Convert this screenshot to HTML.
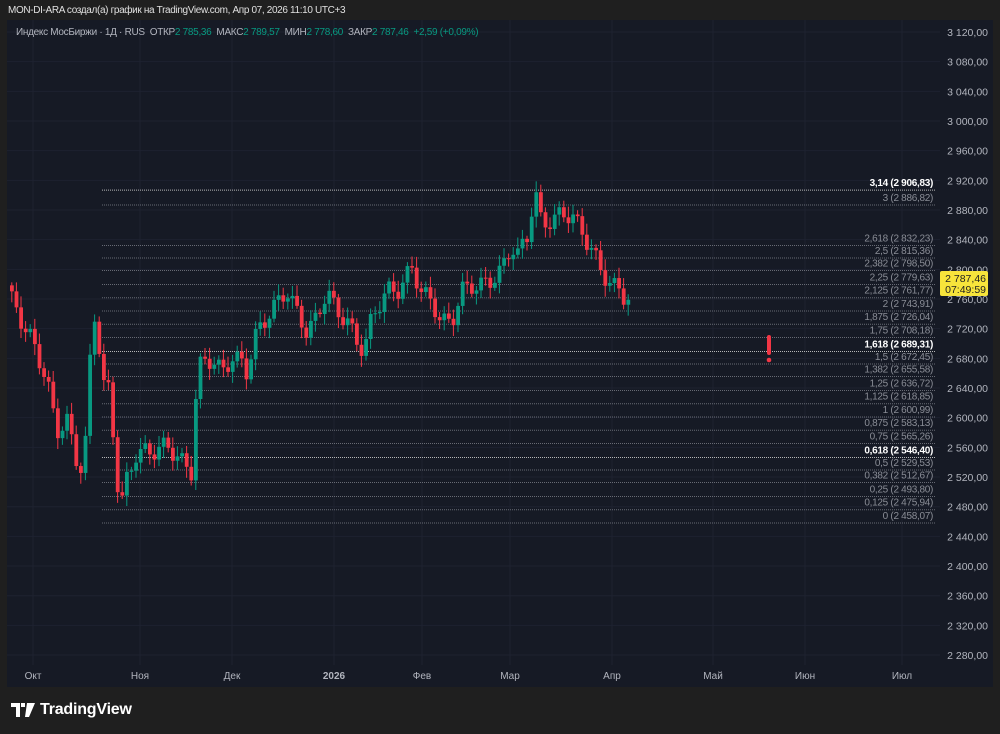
<!DOCTYPE html>
<html><head><meta charset="utf-8"><style>
body{margin:0;width:1000px;height:734px;background:#1f1f1f;overflow:hidden;font-family:"Liberation Sans",sans-serif;position:relative}
.hdr{position:absolute;left:8px;top:5px;color:#e0e0e0;font-size:10px;letter-spacing:-0.35px;white-space:nowrap}
.panel{position:absolute;left:7px;top:20px;width:986px;height:667px;background:#161a25}
.leg{position:absolute;left:16px;top:27px;color:#b2b5be;font-size:10px;letter-spacing:-0.3px;white-space:nowrap}
.leg b{font-weight:normal;color:#089981}
.logo{position:absolute;left:11px;top:701px;color:#fff;font-size:16px;font-weight:bold;display:flex;align-items:center;gap:5px;letter-spacing:-0.2px}
</style></head><body>
<div class="hdr">MON-DI-ARA создал(а) график на TradingView.com, Апр 07, 2026 11:10 UTC+3</div>
<div class="panel"></div>
<svg id="s" width="1000" height="734" style="position:absolute;left:0;top:0" font-family="Liberation Sans, sans-serif"></svg>
<div class="leg">Индекс МосБиржи · 1Д · RUS &nbsp;ОТКР<b>2 785,36</b> &nbsp;МАКС<b>2 789,57</b> &nbsp;МИН<b>2 778,60</b> &nbsp;ЗАКР<b>2 787,46</b> &nbsp;<b>+2,59 (+0,09%)</b></div>
<div class="logo"><svg width="24" height="14" viewBox="0 0 24 14"><path d="M0 0h9v14H5V4H0z M10 0h4v4h-4z M16 0h8l-6 14h-4z" fill="#fff"/></svg>TradingView</div>
<script>
const s=document.getElementById('s');let h='';
const Y=p=>32+(3120-p)*0.7417;
for(let p=3120;p>=2280;p-=40){const y=Y(p);h+=`<line x1="7" x2="940" y1="${y}" y2="${y}" stroke="#1e2230"/>`;
h+=`<text x="988" y="${y+4}" fill="#b2b5be" font-size="10.5" text-anchor="end">${String(p).replace(/(\d)(\d{3})$/,'$1 $2')},00</text>`;}
const mo=[[33,'Окт'],[140,'Ноя'],[232,'Дек'],[334,'2026'],[422,'Фев'],[510,'Мар'],[612,'Апр'],[713,'Май'],[805,'Июн'],[902,'Июл']];
mo.forEach(([x,t])=>{h+=`<line x1="${x}" x2="${x}" y1="20" y2="665" stroke="#1e2230"/><text x="${x}" y="679" fill="#b2b5be" font-size="10" text-anchor="middle" ${t=='2026'?'font-weight="bold"':''}>${t}</text>`});
const fib=[['3,14','2 906,83',2906.83,1],['3','2 886,82',2886.82],['2,618','2 832,23',2832.23],['2,5','2 815,36',2815.36],['2,382','2 798,50',2798.5],['2,25','2 779,63',2779.63],['2,125','2 761,77',2761.77],['2','2 743,91',2743.91],['1,875','2 726,04',2726.04],['1,75','2 708,18',2708.18],['1,618','2 689,31',2689.31,1],['1,5','2 672,45',2672.45],['1,382','2 655,58',2655.58],['1,25','2 636,72',2636.72],['1,125','2 618,85',2618.85],['1','2 600,99',2600.99],['0,875','2 583,13',2583.13],['0,75','2 565,26',2565.26],['0,618','2 546,40',2546.4,1],['0,5','2 529,53',2529.53],['0,382','2 512,67',2512.67],['0,25','2 493,80',2493.8],['0,125','2 475,94',2475.94],['0','2 458,07',2458.07]];
fib.forEach(f=>{const y=Y(f[2]);h+=`<line x1="102" x2="936" y1="${y}" y2="${y}" stroke="${f[3]?'#c8c8c8':'#8a8d96'}" stroke-dasharray="1 1" opacity="${f[3]?0.9:0.7}"/>`;
h+=`<text x="933" y="${y-4}" fill="${f[3]?'#ffffff':'#8a8d96'}" font-size="10" letter-spacing="-0.3" text-anchor="end" ${f[3]?'font-weight="bold"':''}>${f[0]} (${f[1]})</text>`});
const pts=[[10,300],[20,322],[30,340],[45,380],[55,432],[65,420],[75,462],[82,470],[90,330],[95,305],[100,392],[105,375],[112,440],[118,510],[125,480],[135,452],[150,452],[165,445],[180,462],[190,472],[195,380],[200,360],[210,360],[220,372],[230,358],[240,362],[245,372],[255,332],[270,310],[285,290],[295,312],[305,332],[315,318],[325,290],[335,312],[345,320],[355,342],[362,350],[370,318],[385,290],[395,292],[410,268],[420,292],[430,302],[440,322],[450,322],[460,290],[470,286],[480,285],[490,280],[500,270],[510,245],[515,256],[525,238],[533,190],[540,225],[550,220],[560,214],[570,215],[580,232],[590,250],[600,272],[610,286],[620,290],[625,306],[630,280]];
const ys=[];for(let x=10;x<=630;x+=4.6){let i=0;while(i<pts.length-2&&pts[i+1][0]<x)i++;const a=pts[i],b=pts[i+1];const t=Math.max(0,Math.min(1,(x-a[0])/(b[0]-a[0])));ys.push([x,a[1]+(b[1]-a[1])*t+Math.sin(x*1.7)*9])}
let prev=ys[0][1]-6;
ys.forEach(([x,c],i)=>{const o=prev;prev=c;const up=c<o;const col=up?'#089981':'#f23645';const top=Math.min(o,c),bot=Math.max(o,c);
const wt=top-3-Math.abs(Math.sin(i*2.3))*8,wb=bot+3+Math.abs(Math.cos(i*1.9))*8;
h+=`<line x1="${x+1.8}" x2="${x+1.8}" y1="${wt}" y2="${wb}" stroke="${col}"/><rect x="${x}" y="${top}" width="3.8" height="${Math.max(1,bot-top)}" fill="${col}"/>`});
h+=`<rect x="767" y="335" width="4" height="20" rx="2" fill="#f23645"/><circle cx="769" cy="360" r="2.3" fill="#f23645"/>`;
h+=`<rect x="940" y="271" width="48" height="25" rx="2" fill="#f7e43b"/><text x="986" y="282" fill="#1f1f1f" font-size="10.5" text-anchor="end">2 787,46</text><text x="986" y="293" fill="#1f1f1f" font-size="10.5" text-anchor="end">07:49:59</text>`;
s.innerHTML=h;
</script>
</body></html>
